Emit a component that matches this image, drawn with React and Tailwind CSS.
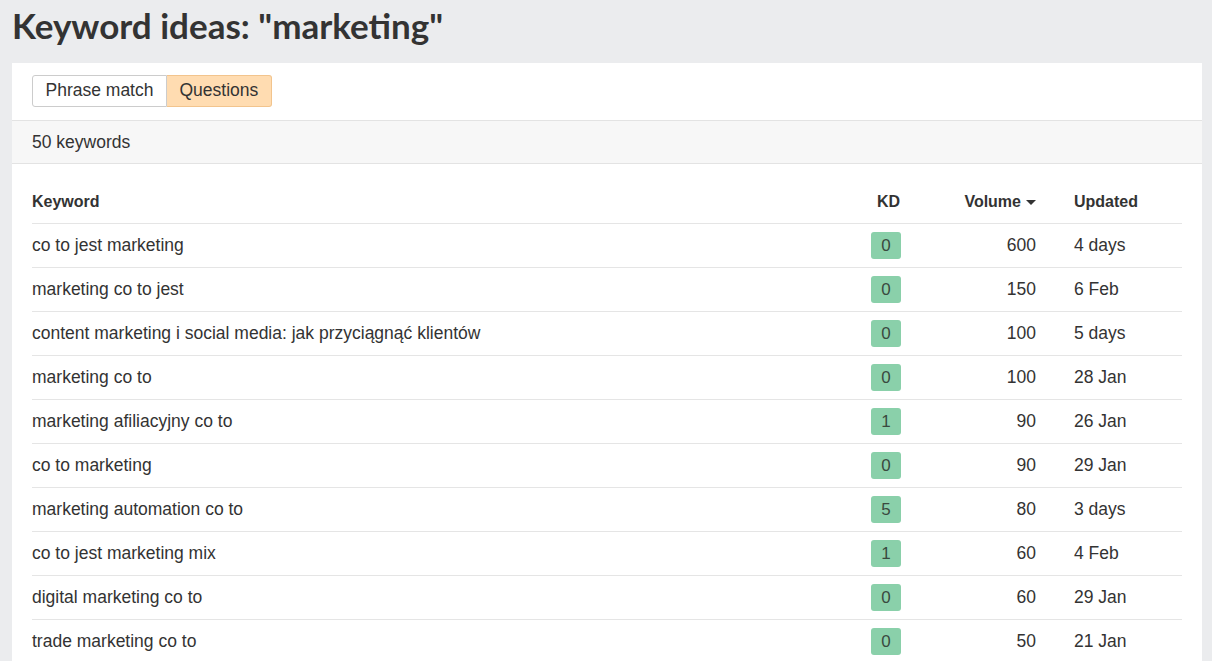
const ROWS = [
  { keyword: 'co to jest marketing', kd: 0, volume: 600, updated: '4 days' },
  { keyword: 'marketing co to jest', kd: 0, volume: 150, updated: '6 Feb' },
  { keyword: 'content marketing i social media: jak przyciągnąć klientów', kd: 0, volume: 100, updated: '5 days' },
  { keyword: 'marketing co to', kd: 0, volume: 100, updated: '28 Jan' },
  { keyword: 'marketing afiliacyjny co to', kd: 1, volume: 90, updated: '26 Jan' },
  { keyword: 'co to marketing', kd: 0, volume: 90, updated: '29 Jan' },
  { keyword: 'marketing automation co to', kd: 5, volume: 80, updated: '3 days' },
  { keyword: 'co to jest marketing mix', kd: 1, volume: 60, updated: '4 Feb' },
  { keyword: 'digital marketing co to', kd: 0, volume: 60, updated: '29 Jan' },
  { keyword: 'trade marketing co to', kd: 0, volume: 50, updated: '21 Jan' },
];

export default function App() {
  return (
    <div className="h-[661px] overflow-hidden bg-[#ebecee] pl-3 pr-[10px] font-['Liberation_Sans',Arial,sans-serif] text-[#333]">
      {/* Tytuł */}
      <h1 className="h-[63px] pt-[5px] font-['Lato',sans-serif] text-[35px] font-bold leading-[40px] text-[#333]">
        Keyword ideas: "marketing"
      </h1>

      <div className="bg-white">
        {/* Przełącznik */}
        <div className="flex px-5 pt-3 pb-[13px]">
          <button className="h-[32px] rounded-l-[3px] border border-[#ccc] bg-white px-[12.5px] text-[17.5px] leading-none text-[#333]">
            Phrase match
          </button>
          <button className="h-[32px] rounded-r-[3px] border border-l-0 border-[#f2c48d] bg-[#ffdcb1] px-[12.5px] text-[17.5px] leading-none text-[#333]">
            Questions
          </button>
        </div>

        {/* Licznik */}
        <div className="flex h-[44px] items-center border-y border-[#e3e3e3] bg-[#f7f7f7] px-5 text-[17.5px]">
          50 keywords
        </div>

        {/* Tabela */}
        <div className="px-5 pt-4">
          <div className="flex h-[44px] items-center border-b border-[#e5e5e5] text-[16px] font-bold">
            <div className="flex-1">Keyword</div>
            <div className="w-[70px] pr-[1px] text-right">KD</div>
            <div className="flex w-[135px] items-center justify-end gap-[5px]">
              Volume
              <svg width="10" height="5" viewBox="0 0 10 5" className="mt-[2px]">
                <path d="M0 0h10L5 5z" fill="#333" />
              </svg>
            </div>
            <div className="w-[146px] pl-[38px]">Updated</div>
          </div>

          {ROWS.map((r) => (
            <div key={r.keyword} className="flex h-[44px] items-center border-b border-[#e5e5e5] text-[17.5px]">
              <div className="flex-1">{r.keyword}</div>
              <div className="flex w-[70px] justify-end">
                <span className="flex h-[27px] w-[30px] items-center justify-center rounded-[3px] bg-[#8ad0aa] text-[17px] text-[#3a4a40]">
                  {r.kd}
                </span>
              </div>
              <div className="w-[135px] text-right">{r.volume}</div>
              <div className="w-[146px] pl-[38px]">{r.updated}</div>
            </div>
          ))}
        </div>
      </div>
    </div>
  );
}
